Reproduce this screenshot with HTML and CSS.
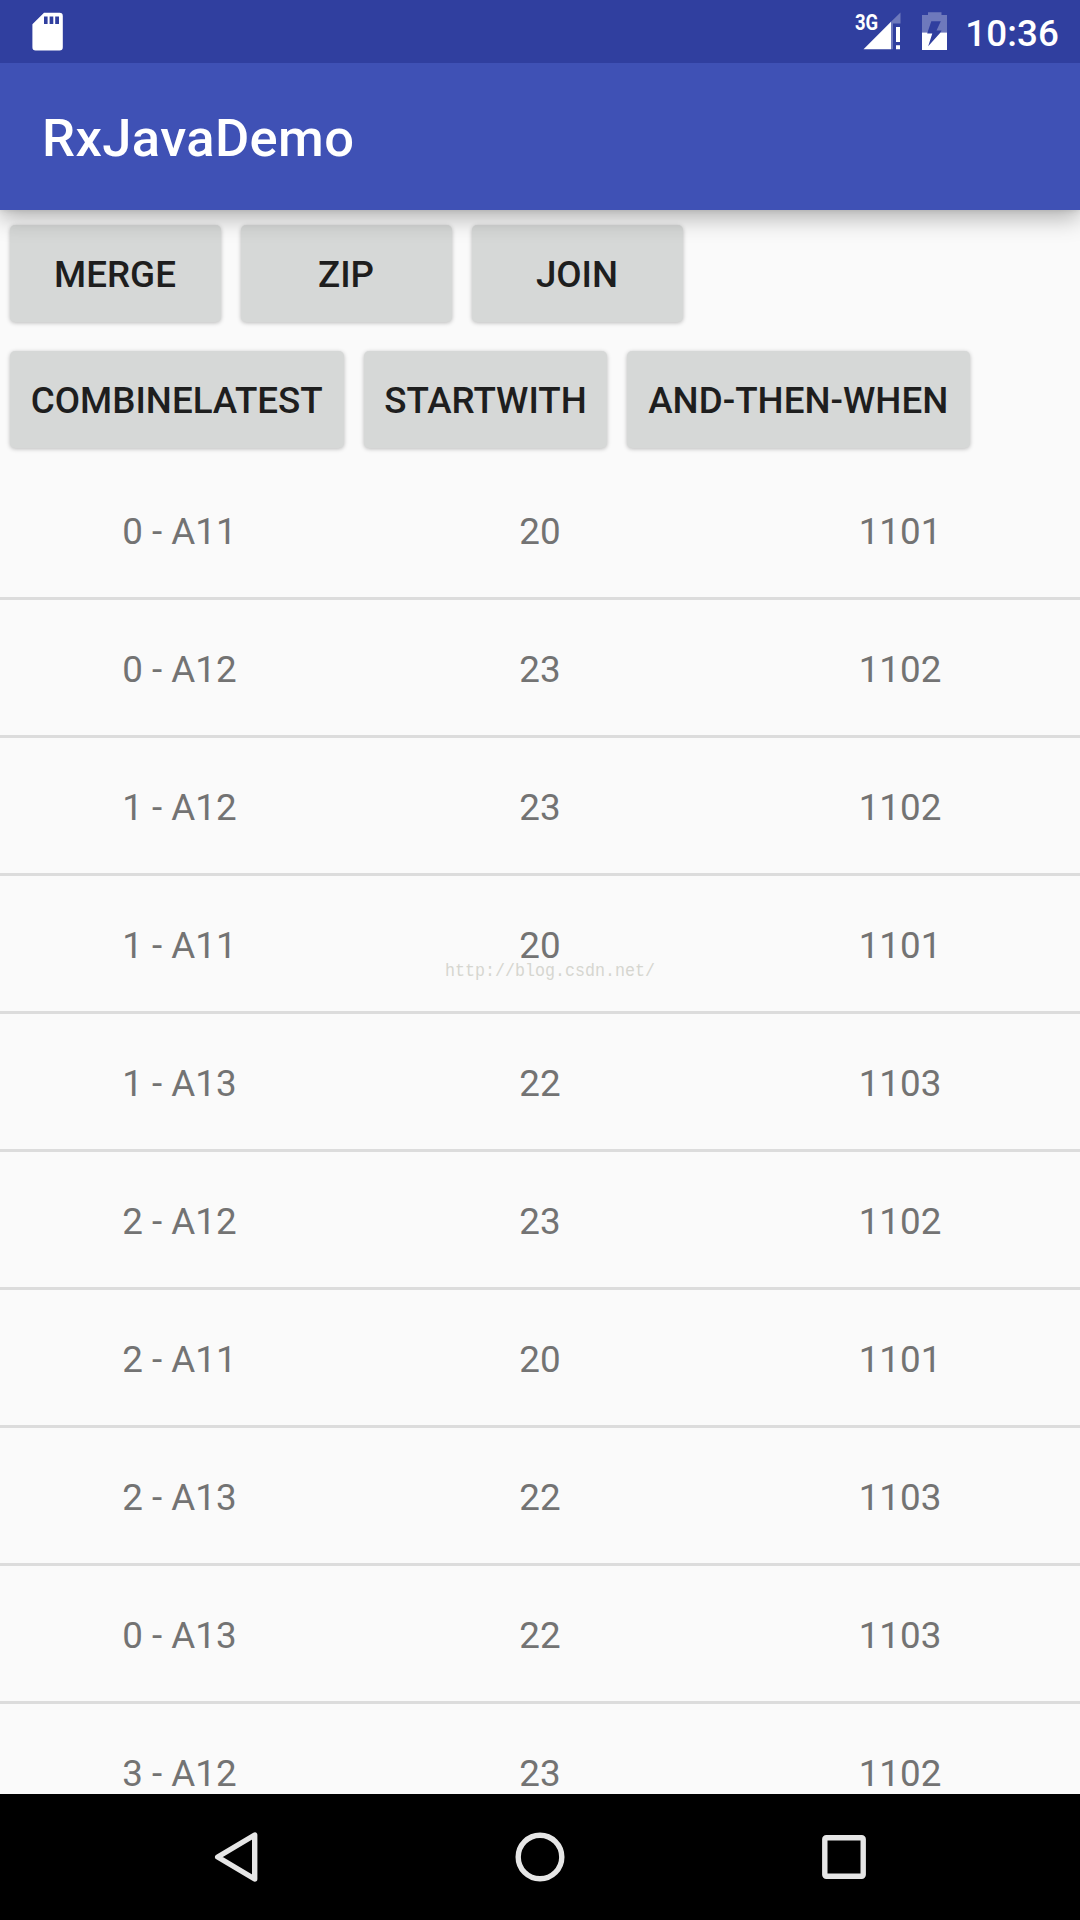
FILE: index.html
```html
<!DOCTYPE html>
<html lang="en">
<head>
<meta charset="utf-8">
<title>RxJavaDemo</title>
<link rel="stylesheet" href="styles.css">
</head>
<body>
<div class="screen">
  <header class="status-bar">
    <svg class="sd-icon" width="32" height="40" viewBox="0 0 32 40">
      <path fill="#fff" fill-rule="evenodd" d="M12 .7H27.6A3.2 3.2 0 0 1 30.8 3.9V35.3A3.2 3.2 0 0 1 27.6 38.5H3.6A3.2 3.2 0 0 1 .4 35.3V12.3ZM12 4.4V12H15.6V4.4ZM17.6 4.4V12H21.3V4.4ZM23.2 4.4V12H27V4.4Z"/>
    </svg>
    <div class="status-right">
      <div class="signal">
        <svg width="46" height="40" viewBox="0 0 46 40">
          <path fill="#fff" d="M8.5 37.3 36 9.8V37.3Z"/>
          <path fill="#fff" fill-opacity=".3" d="M36 9.8 45.5.5V11.5H38V37.3H36Z"/>
          <path fill="#fff" d="M41 15H45V30H41ZM41 33.3H45V37.3H41Z"/>
        </svg>
        <span class="network">3G</span>
      </div>
      <svg class="battery" width="26" height="40" viewBox="0 0 26 40">
        <path fill="#fff" fill-opacity=".3" d="M6 .3H19.5V3H25V20.5H18.5L19.5 18.5H14.5L18.8 9.2H9.3L5.5 20.5H0V3H6Z"/>
        <path fill="#fff" d="M0 20.5H5.5L5.2 21.5H10.3L6.2 34.3 18.5 20.5H25V38H0Z"/>
      </svg>
      <span class="clock">10:36</span>
    </div>
  </header>
  <div class="app-bar"><h1 class="app-title">RxJavaDemo</h1></div>
  <main class="content">
    <div class="button-row">
      <button class="btn">MERGE</button>
      <button class="btn">ZIP</button>
      <button class="btn">JOIN</button>
    </div>
    <div class="button-row">
      <button class="btn btn-combine">COMBINELATEST</button>
      <button class="btn btn-start">STARTWITH</button>
      <button class="btn btn-and">AND-THEN-WHEN</button>
    </div>
    <div class="list">
      <div class="row"><span>0 - A11</span><span>20</span><span>1101</span></div>
      <div class="row"><span>0 - A12</span><span>23</span><span>1102</span></div>
      <div class="row"><span>1 - A12</span><span>23</span><span>1102</span></div>
      <div class="row"><span>1 - A11</span><span>20</span><span>1101</span></div>
      <div class="row"><span>1 - A13</span><span>22</span><span>1103</span></div>
      <div class="row"><span>2 - A12</span><span>23</span><span>1102</span></div>
      <div class="row"><span>2 - A11</span><span>20</span><span>1101</span></div>
      <div class="row"><span>2 - A13</span><span>22</span><span>1103</span></div>
      <div class="row"><span>0 - A13</span><span>22</span><span>1103</span></div>
      <div class="row"><span>3 - A12</span><span>23</span><span>1102</span></div>
    </div>
  </main>
  <nav class="nav-bar">
    <svg width="52" height="52" viewBox="0 0 52 52"><path d="M44.7 4V48L7.7 26Z"/></svg>
    <svg width="52" height="52" viewBox="0 0 52 52"><circle cx="26" cy="26" r="21.8"/></svg>
    <svg width="52" height="52" viewBox="0 0 52 52"><rect x="6.8" y="6.8" width="38.4" height="38.4" rx="1.5"/></svg>
  </nav>
  <div class="watermark">http://blog.csdn.net/</div>
</div>
</body>
</html>
```
FILE: styles.css
```css
* { box-sizing: border-box; }

body {
  margin: 0;
  font-family: Roboto, sans-serif;
}

.screen {
  position: relative;
  display: flex;
  flex-direction: column;
  width: 1080px;
  height: 1920px;
  overflow: hidden;
  background: #fafafa;
}

.status-bar {
  z-index: 2;
  display: flex;
  justify-content: space-between;
  align-items: flex-start;
  flex: 0 0 63px;
  padding: 12px 21px 0 32px;
  background: #303f9f;
  color: #fff;
}

.status-right {
  display: flex;
  align-items: flex-start;
}

.signal {
  position: relative;
  height: 40px;
  margin-right: 21px;
}

.network {
  position: absolute;
  left: 0;
  top: 0;
  font: 700 22px/21px Roboto, sans-serif;
  transform: scaleX(.84);
  transform-origin: left;
}

.battery { margin-right: 17px; }

.clock {
  font-size: 36.75px;
  font-weight: 500;
  line-height: 43px;
  letter-spacing: .1px;
}

.app-bar {
  z-index: 1;
  display: flex;
  align-items: center;
  flex: 0 0 147px;
  padding: 3px 0 0 42px;
  background: #3f51b5;
  box-shadow: 0 8px 22px rgba(0, 0, 0, .29), 0 0 6px rgba(0, 0, 0, .12);
}

.app-title {
  margin: 0;
  color: #fff;
  font-size: 52.5px;
  font-weight: 500;
  line-height: 62px;
  letter-spacing: .4px;
}

.content {
  flex: 1;
  min-height: 0;
  overflow: hidden;
}

.button-row {
  display: flex;
  gap: 20px;
  height: 126px;
  padding: 14.5px 9.5px;
}

.btn {
  width: 211px;
  height: 97px;
  padding: 3px 0 0;
  border: 0;
  border-radius: 5px;
  background: #d6d8d7;
  box-shadow: 0 1px 4px rgba(0, 0, 0, .26);
  color: #1e1e1e;
  font: 500 36.75px/43px Roboto, sans-serif;
  white-space: nowrap;
}

.btn-combine { width: 334.5px; }
.btn-start { width: 243px; }
.btn-and { width: 342.5px; }

.row {
  display: grid;
  grid-template-columns: 359px 362px 358px;
  align-items: center;
  height: 138px;
  padding-top: 4px;
  border-bottom: 3px solid #dcdcdc;
  color: #737373;
  font-size: 36.75px;
  line-height: 43px;
  text-align: center;
}

.nav-bar {
  display: flex;
  justify-content: center;
  align-items: center;
  gap: 252px;
  flex: 0 0 126px;
  background: #000;
}

.nav-bar svg {
  fill: none;
  stroke: #e6e6e6;
  stroke-width: 5.4;
  stroke-linejoin: round;
}

.watermark {
  position: absolute;
  left: 445px;
  top: 961px;
  color: #d6d6d0;
  font: 16.66px/22px "Liberation Mono", monospace;
  transform: scaleY(1.12);
}
```
